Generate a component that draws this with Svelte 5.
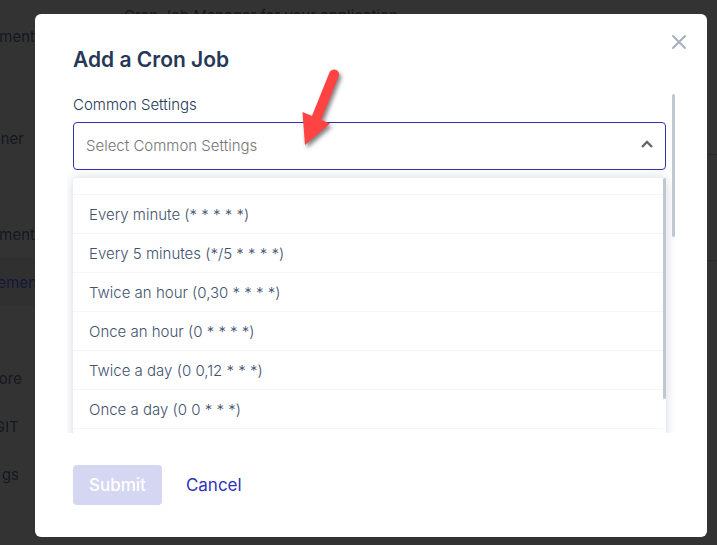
<script>
  let selected = "";

  const schedules = [
    "Every minute (* * * * *)",
    "Every 5 minutes (*/5 * * * *)",
    "Twice an hour (0,30 * * * *)",
    "Once an hour (0 * * * *)",
    "Twice a day (0 0,12 * * *)",
    "Once a day (0 0 * * *)",
  ];

  // end: how far the tail of each menu label reaches
  const menu = [
    { text: "ment", end: 35 },
    { text: "", end: 35 },
    { text: "ner", end: 24 },
    { text: "", end: 35 },
    { text: "ment", end: 35 },
    { text: "emen", end: 37, active: true },
    { text: "", end: 35 },
    { text: "ore", end: 22 },
    { text: "GIT", end: 19 },
    { text: "gs", end: 19 },
  ];
</script>

<div class="page">
  <nav class="sidebar">
    {#each menu as item}
      <div class="menu-row" class:active={item.active}>
        <span class="menu-text" style:width="{item.end}px">{item.text}</span>
      </div>
    {/each}
  </nav>
  <div class="page-main">
    <p class="page-intro">Cron Job Manager for your application.</p>
    <div class="page-box"></div>
  </div>
</div>

<div class="overlay">
  <div class="modal" role="dialog" aria-labelledby="modal-title">
    <button class="close" type="button" aria-label="Close">
      <svg width="14" height="14" viewBox="0 0 14 14">
        <path d="M1 1L13 13M13 1L1 13" stroke="#a3adbd" stroke-width="1.8" stroke-linecap="round" />
      </svg>
    </button>

    <h2 id="modal-title">Add a Cron Job</h2>

    <div class="scroller">
      <label for="common">Common Settings</label>
      <div class="field">
        <select id="common" bind:value={selected}>
          <option value="">Select Common Settings</option>
        </select>
        <svg class="chevron" width="12" height="8" viewBox="0 0 12 8">
          <path d="M1 7L6 2L11 7" fill="none" stroke="#666" stroke-width="2.4" />
        </svg>
      </div>
      <ul class="options">
        <li class="cut"></li>
        {#each schedules as schedule}
          <li><button type="button" on:click={() => (selected = "")}>{schedule}</button></li>
        {/each}
        <li class="bar options-bar"></li>
      </ul>
      <span class="bar scroller-bar"></span>
    </div>

    <div class="actions">
      <button class="submit" type="button" disabled>Submit</button>
      <button class="cancel" type="button">Cancel</button>
    </div>

    <svg class="pointer" width="56" height="92" viewBox="0 0 56 92">
      <g fill="#ff4343" stroke="#ff4343">
        <path d="M39 10.5L21.5 54" stroke-width="10" stroke-linecap="round" />
        <path d="M7.5 48L35 59.5L10 81Z" stroke="none" />
      </g>
    </svg>
  </div>
</div>

<style>
  :global(body) {
    margin: 0;
    background: #333;
    font-family: Inter, "Open Sans", sans-serif;
  }
  button,
  select {
    font-family: inherit;
    border: none;
    background: none;
    padding: 0;
  }

  .page {
    position: fixed;
    inset: 0;
    display: flex;
    overflow: hidden;
    color: #14181f;
    font-size: 15px;
  }
  .sidebar {
    width: 60px;
    flex: none;
    padding-top: 18px;
    overflow: hidden;
  }
  .menu-row {
    display: flex;
    height: 48px;
    align-items: center;
  }
  .menu-row:first-child {
    height: 36px;
    padding-bottom: 12px;
  }
  .menu-row.active {
    background: #303031;
    color: #12163c;
  }
  .menu-text {
    display: flex;
    flex: none;
    justify-content: flex-end;
  }
  .page-main {
    flex: 1;
    padding: 4px 0 0 64px;
  }
  .page-intro {
    margin: 0;
    line-height: 24px;
  }
  .page-box {
    margin-top: 126px;
    height: 105px;
    border-top: 1px solid #2a2a2a;
    border-bottom: 1px solid #2a2a2a;
  }

  .overlay {
    position: relative;
    box-sizing: border-box;
    min-height: 100vh;
    padding: 14px 10px 8px 35px;
  }
  .modal {
    position: relative;
    padding: 31px 32px 32px;
    background: #fff;
    border-radius: 6px;
  }
  .close {
    position: absolute;
    top: 21px;
    right: 21px;
    display: flex;
  }
  h2 {
    margin: 0 0 19px;
    padding-left: 6px;
    color: #253858;
    font-size: 21px;
    font-weight: 600;
    line-height: 30px;
  }

  .scroller {
    position: relative;
    height: 339px;
    padding: 0 9px 0 6px;
    overflow: hidden;
  }
  label {
    display: block;
    margin-bottom: 6px;
    color: #253858;
    font-size: 15px;
    font-weight: 300;
    line-height: 22px;
  }
  .field {
    position: relative;
    display: flex;
  }
  select {
    appearance: none;
    flex: 1;
    height: 48px;
    padding: 0 36px 2px 12px;
    border: 1px solid #2f33b8;
    border-radius: 4px;
    background: #fff;
    color: #757575;
    font-size: 15px;
    font-weight: 300;
  }
  .chevron {
    position: absolute;
    top: 18px;
    right: 13px;
  }
  .options {
    position: relative;
    margin: 8px 0 0;
    padding: 0 3px 24px 0;
    list-style: none;
    background: #fff;
    border-radius: 4px;
    box-shadow: 0 0 12px rgba(37, 56, 88, 0.2);
  }
  .options li {
    border-bottom: 1px solid #f4f5fa;
  }
  .options .cut {
    height: 16px;
  }
  .options button {
    display: block;
    width: 100%;
    height: 38px;
    padding: 0 16px;
    color: #42526e;
    font-size: 15px;
    font-weight: 300;
    text-align: left;
  }
  .bar {
    position: absolute;
    top: 0;
    right: 0;
    width: 3px;
    border-radius: 2px;
    background: #c1c7d0;
  }
  .options .options-bar {
    height: 221px;
    border: none;
  }
  .scroller-bar {
    height: 143px;
  }

  .actions {
    display: flex;
    gap: 24px;
    margin-top: 32px;
    padding-left: 6px;
  }
  .actions button {
    height: 40px;
    font-size: 17px;
  }
  .actions .submit {
    padding: 0 16px;
    border-radius: 4px;
    background: #d5d6f1;
    color: #fff;
    font-weight: 500;
  }
  .actions .cancel {
    color: #2f33b8;
  }

  .pointer {
    position: absolute;
    top: 50px;
    left: 260px;
    filter: drop-shadow(2px 3px 2px rgba(0, 0, 0, 0.5));
    pointer-events: none;
  }
</style>
